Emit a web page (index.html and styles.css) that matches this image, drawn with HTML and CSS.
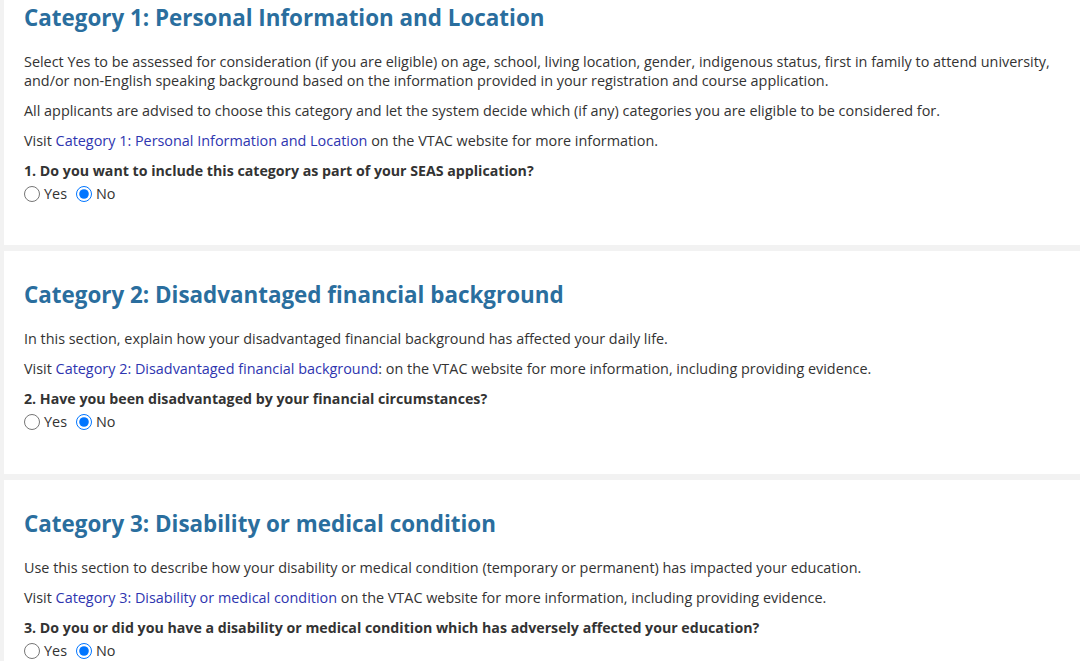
FILE: index.html
```html
<!DOCTYPE html>
<html lang="en">
<head>
<meta charset="utf-8">
<title>SEAS Categories</title>
<link rel="stylesheet" href="styles.css">
</head>
<body>
<div class="page">
  <section class="card card-first">
    <h2 class="card-title">Category 1: Personal Information and Location</h2>
    <p class="text">Select Yes to be assessed for consideration (if you are eligible) on age, school, living location, gender, indigenous status, first in family to attend university, and/or non-English speaking background based on the information provided in your registration and course application.</p>
    <p class="text">All applicants are advised to choose this category and let the system decide which (if any) categories you are eligible to be considered for.</p>
    <p class="text">Visit <a class="link" href="#">Category 1: Personal Information and Location</a> on the VTAC website for more information.</p>
    <p class="question">1. Do you want to include this category as part of your SEAS application?</p>
    <div class="radios">
      <label class="radio"><input type="radio" name="q1"><span>Yes</span></label>
      <label class="radio"><input type="radio" name="q1" checked><span>No</span></label>
    </div>
  </section>
  <section class="card">
    <h2 class="card-title">Category 2: Disadvantaged financial background</h2>
    <p class="text">In this section, explain how your disadvantaged financial background has affected your daily life.</p>
    <p class="text">Visit <a class="link" href="#">Category 2: Disadvantaged financial background</a>: on the VTAC website for more information, including providing evidence.</p>
    <p class="question">2. Have you been disadvantaged by your financial circumstances?</p>
    <div class="radios">
      <label class="radio"><input type="radio" name="q2"><span>Yes</span></label>
      <label class="radio"><input type="radio" name="q2" checked><span>No</span></label>
    </div>
  </section>
  <section class="card">
    <h2 class="card-title">Category 3: Disability or medical condition</h2>
    <p class="text">Use this section to describe how your disability or medical condition (temporary or permanent) has impacted your education.</p>
    <p class="text">Visit <a class="link" href="#">Category 3: Disability or medical condition</a> on the VTAC website for more information, including providing evidence.</p>
    <p class="question">3. Do you or did you have a disability or medical condition which has adversely affected your education?</p>
    <div class="radios">
      <label class="radio"><input type="radio" name="q3"><span>Yes</span></label>
      <label class="radio"><input type="radio" name="q3" checked><span>No</span></label>
    </div>
  </section>
</div>
</body>
</html>
```
FILE: styles.css
```css
html, body {
  margin: 0;
  padding: 0;
  background: #f2f2f2;
}
body {
  font-family: "Open Sans", "Liberation Sans", sans-serif;
  font-size: 14.4px;
  color: #333333;
  overflow: hidden;
}
.page {
  display: flex;
  flex-direction: column;
  gap: 6px;
  padding-left: 4px;
  margin-top: -27px;
}
.card {
  background: #ffffff;
  padding: 31px 24px 42px 20px;
}
.card-first {
  padding-top: 32px;
  padding-bottom: 41px;
}
.card-title {
  margin: 0 0 21px;
  font-size: 22.4px;
  line-height: 26px;
  font-weight: 700;
  color: #2a6e9e;
}
.text {
  margin: 0 0 11px;
  line-height: 19px;
}
.link {
  color: #2e35b0;
  text-decoration: none;
}
.question {
  margin: 0 0 4px;
  font-size: 14.2px;
  font-weight: 700;
  line-height: 19px;
}
.radios {
  display: flex;
  gap: 9px;
  line-height: 20px;
}
.radio {
  display: flex;
  align-items: center;
}
.radio input {
  margin: 0 4px 0 0;
  width: 16px;
  height: 16px;
}
```
